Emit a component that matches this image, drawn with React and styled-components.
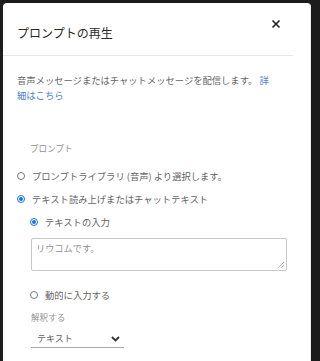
import React from "react";
import styled, { createGlobalStyle } from "styled-components";

const Global = createGlobalStyle`
  html, body { margin: 0; padding: 0; }
  body {
    background: #1c1c1c;
    font-family: "Noto Sans CJK JP", "Noto Sans", sans-serif;
    overflow: hidden;
  }
`;

const Dialog = styled.div`
  position: relative;
  margin: 3px 0 0 3px;
  width: 308px;
  height: 358px;
  box-sizing: border-box;
  background: #fff;
  border-radius: 4px 4px 0 0;
  border-right: 1px solid #ebebeb;
  overflow: hidden;
`;

const Header = styled.div`
  height: 53px;
  box-sizing: border-box;
  margin-right: 17px;
  padding: 23px 0 0 14px;
  border-bottom: 1px solid #e6e6e6;
`;

const Title = styled.div`
  font-size: 12px;
  line-height: 14px;
  color: #2a2a2a;
`;

const Close = styled.button`
  position: absolute;
  top: 16px;
  left: 268px;
  width: 10px;
  height: 10px;
  padding: 0;
  border: 0;
  background: none;
  display: flex;
`;

const Body = styled.div`
  padding-left: 14px;
  display: flex;
  flex-direction: column;
  align-items: flex-start;
`;

const Description = styled.p`
  margin: 16.5px 0 0;
  width: 261px;
  font-size: 9.3px;
  line-height: 15px;
  color: #666;
`;

const Link = styled.a`
  color: #4a82c8;
  text-decoration: none;
`;

const FieldLabel = styled.div`
  margin: ${(p) => p.$mt}px 0 0 ${(p) => p.$indent}px;
  font-size: 8.6px;
  line-height: 12px;
  color: #939393;
`;

const RadioRow = styled.label`
  display: flex;
  align-items: center;
  height: 14px;
  margin: ${(p) => p.$mt}px 0 0 ${(p) => p.$indent}px;
  gap: ${(p) => p.$gap}px;
  font-size: 9.3px;
  color: #636363;
`;

const RadioDot = styled.span`
  width: 8px;
  height: 8px;
  box-sizing: border-box;
  border-radius: 50%;
  border: 1px solid ${(p) => (p.$checked ? "#1a73e8" : "#777")};
  display: flex;
  align-items: center;
  justify-content: center;
  flex: none;
  &::after {
    content: "";
    width: 4px;
    height: 4px;
    border-radius: 50%;
    background: ${(p) => (p.$checked ? "#1a73e8" : "transparent")};
  }
`;

const TextArea = styled.div`
  position: relative;
  margin: 9.3px 0 0 14px;
  width: 256px;
  height: 33px;
  box-sizing: border-box;
  border: 1px solid #c8c8c8;
  border-radius: 2px;
  padding: 2px 0 0 4px;
  font-size: 9.2px;
  line-height: 14px;
  color: #939393;
`;

const Grip = styled.svg`
  position: absolute;
  right: 1px;
  bottom: 1px;
`;

const Select = styled.div`
  margin: 4px 0 0 14px;
  width: 93px;
  height: 21px;
  box-sizing: border-box;
  padding: 4px 4px 0 6px;
  border-bottom: 1px solid #a8a8a8;
  display: flex;
  justify-content: space-between;
  align-items: center;
  font-size: 9px;
  line-height: 14px;
  color: #636363;
`;

function Radio({ checked, children, mt, indent, gap }) {
  return (
    <RadioRow $mt={mt} $indent={indent} $gap={gap}>
      <RadioDot $checked={checked} />
      <span>{children}</span>
    </RadioRow>
  );
}

export default function App() {
  return (
    <>
      <Global />
      <Dialog>
        <Header>
          <Title>プロンプトの再生</Title>
        </Header>
        <Close aria-label="close">
          <svg width="10" height="10" viewBox="0 0 10 10">
            <path d="M1.5 1.5 L8.5 8.5 M8.5 1.5 L1.5 8.5" stroke="#222" strokeWidth="1.6" />
          </svg>
        </Close>
        <Body>
          <Description>
            音声メッセージまたはチャットメッセージを配信します。 <Link href="#">詳</Link>
            <Link href="#">細はこちら</Link>
          </Description>
          <FieldLabel $mt={39.5} $indent={13}>プロンプト</FieldLabel>
          <Radio mt={14.7} indent={0} gap={7}>プロンプトライブラリ (音声) より選択します。</Radio>
          <Radio checked mt={9.3} indent={0} gap={7}>テキスト読み上げまたはチャットテキスト</Radio>
          <Radio checked mt={8.7} indent={13} gap={7}>テキストの入力</Radio>
          <TextArea>
            リウコムです。
            <Grip width="8" height="8" viewBox="0 0 8 8">
              <path d="M7 1 L1 7 M7 4 L4 7" stroke="#666" strokeWidth="0.8" strokeDasharray="1 0.6" />
            </Grip>
          </TextArea>
          <Radio mt={16.7} indent={13} gap={7}>動的に入力する</Radio>
          <FieldLabel $mt={9} $indent={14}>解釈する</FieldLabel>
          <Select>
            <span>テキスト</span>
            <svg width="9" height="6" viewBox="0 0 9 6">
              <path d="M1 1 L4.5 4.5 L8 1" stroke="#333" strokeWidth="1.8" fill="none" />
            </svg>
          </Select>
        </Body>
      </Dialog>
    </>
  );
}
